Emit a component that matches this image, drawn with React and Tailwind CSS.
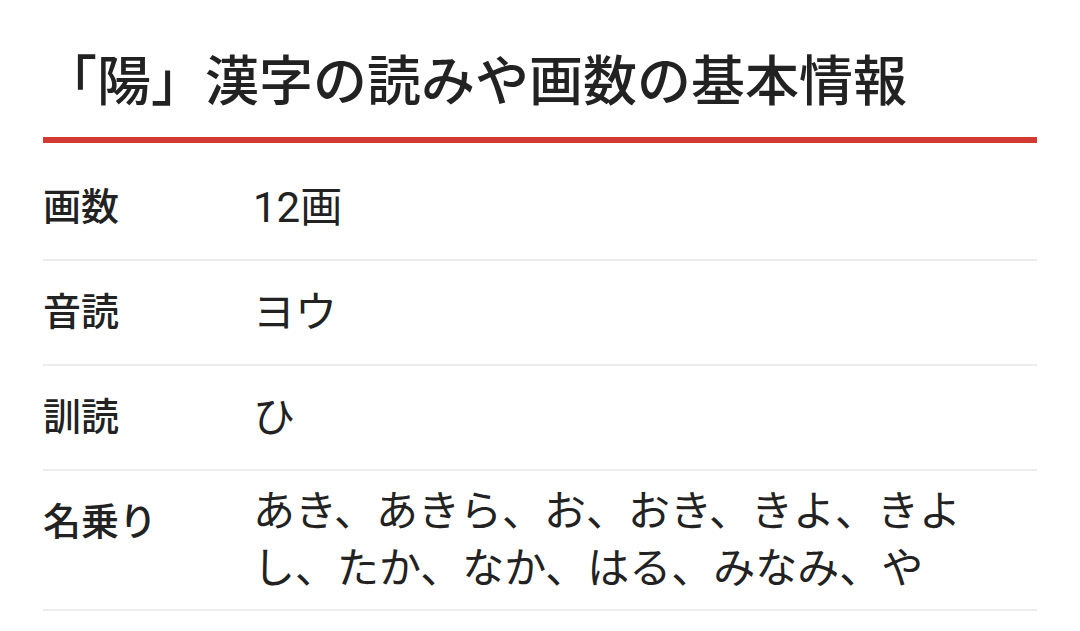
export default function App() {
  const rows = [
    { label: "画数", value: "12画" },
    { label: "音読", value: "ヨウ" },
    { label: "訓読", value: "ひ" },
    { label: "名乗り", value: "あき、あきら、お、おき、きよ、きよし、たか、なか、はる、みなみ、や" },
  ];
  return (
    <div
      className="min-h-[631px] bg-white px-[43px] text-[#222]"
      style={{ fontFamily: 'Roboto, "Noto Sans CJK JP", sans-serif' }}
    >
      <h2 className="pt-[45px] pb-[16px] text-[54px] leading-[76px] font-medium border-b-[6px] border-[#d33a33] whitespace-nowrap">
        「陽」漢字の読みや画数の基本情報
      </h2>
      <div className="mt-[13px]">
        {rows.map((r) => (
          <div key={r.label} className="flex items-start border-b-2 border-[#ececec] py-[12px]">
            <div className="w-[210px] shrink-0 text-[38px] leading-[79px] font-medium">{r.label}</div>
            <div className="flex-1 self-center text-[42px] leading-[57px]">{r.value}</div>
          </div>
        ))}
      </div>
    </div>
  );
}
